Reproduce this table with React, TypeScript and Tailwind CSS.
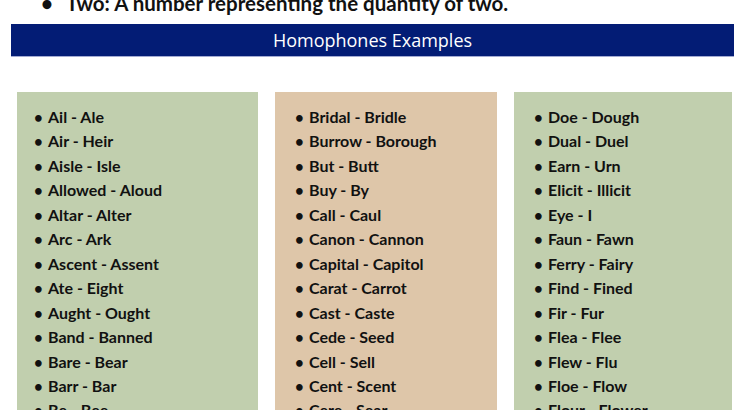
const col1 = [
  'Ail - Ale', 'Air - Heir', 'Aisle - Isle', 'Allowed - Aloud', 'Altar - Alter', 'Arc - Ark',
  'Ascent - Assent', 'Ate - Eight', 'Aught - Ought', 'Band - Banned', 'Bare - Bear', 'Barr - Bar', 'Be - Bee',
]
const col2 = [
  'Bridal - Bridle', 'Burrow - Borough', 'But - Butt', 'Buy - By', 'Call - Caul', 'Canon - Cannon',
  'Capital - Capitol', 'Carat - Carrot', 'Cast - Caste', 'Cede - Seed', 'Cell - Sell', 'Cent - Scent', 'Cere - Sear',
]
const col3 = [
  'Doe - Dough', 'Dual - Duel', 'Earn - Urn', 'Elicit - Illicit', 'Eye - I', 'Faun - Fawn',
  'Ferry - Fairy', 'Find - Fined', 'Fir - Fur', 'Flea - Flee', 'Flew - Flu', 'Floe - Flow', 'Flour - Flower',
]

function Column({ items, bg, pl }: { items: string[]; bg: string; pl: string }) {
  return (
    <div className={`${bg} pt-[13px] h-[330px] overflow-hidden`}>
      <ul className={pl}>
        {items.map((t) => (
          <li key={t} className="flex leading-[24.45px] text-[16px] font-bold text-[#111]">
            <span className="w-[14px] shrink-0 text-[15px]">•</span>
            {t}
          </li>
        ))}
      </ul>
    </div>
  )
}

export default function App() {
  return (
    <div className="w-[750px] h-[410px] bg-white overflow-hidden" style={{ fontFamily: 'Lato, "Open Sans", sans-serif' }}>
      {/* Cut-off line from previous list */}
      <div className="h-[24px] overflow-hidden">
        <div className="-mt-[9px] flex pl-[41px] text-[20.5px] font-bold text-[#111] leading-[24px]">
          <span className="w-[25px] shrink-0">•</span>
          Two: A number representing the quantity of two.
        </div>
      </div>

      {/* Title bar */}
      <div className="ml-[11px] w-[723px] h-[33px] bg-[#031c75] border-b border-[#a3abd3] flex items-center justify-center">
        <span className="text-white text-[18px]" style={{ fontFamily: '"Open Sans", sans-serif' }}>
          Homophones Examples
        </span>
      </div>

      {/* Columns */}
      <div className="mt-[35px] pl-[17px] grid grid-cols-[241px_222px_218px] gap-x-[17px]">
        <Column items={col1} bg="bg-[#c1cfae]" pl="pl-[17px]" />
        <Column items={col2} bg="bg-[#dec6a9]" pl="pl-[20px]" />
        <Column items={col3} bg="bg-[#c1cfae]" pl="pl-[20px]" />
      </div>
    </div>
  )
}
